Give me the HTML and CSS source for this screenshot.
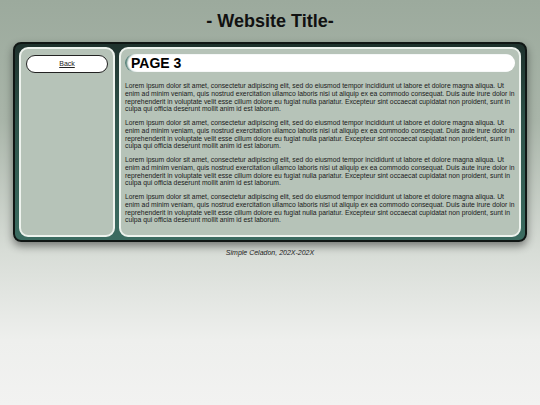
FILE: index.html
```html
<!DOCTYPE html>
<html>
<head>
<meta charset="utf-8">
<link rel="stylesheet" href="styles.css">
</head>
<body>
<header class="site-header"><h1 class="site-title">- Website Title-</h1></header>
<div class="frame">
  <nav class="sidebar">
    <a class="back-btn" href="#">Back</a>
  </nav>
  <main class="content">
    <h2 class="page-title">PAGE 3</h2>
    <p>Lorem ipsum dolor sit amet, consectetur adipiscing elit, sed do eiusmod tempor incididunt ut labore et dolore magna aliqua. Ut enim ad minim veniam, quis nostrud exercitation ullamco laboris nisi ut aliquip ex ea commodo consequat. Duis aute irure dolor in reprehenderit in voluptate velit esse cillum dolore eu fugiat nulla pariatur. Excepteur sint occaecat cupidatat non proident, sunt in culpa qui officia deserunt mollit anim id est laborum.</p>
    <p>Lorem ipsum dolor sit amet, consectetur adipiscing elit, sed do eiusmod tempor incididunt ut labore et dolore magna aliqua. Ut enim ad minim veniam, quis nostrud exercitation ullamco laboris nisi ut aliquip ex ea commodo consequat. Duis aute irure dolor in reprehenderit in voluptate velit esse cillum dolore eu fugiat nulla pariatur. Excepteur sint occaecat cupidatat non proident, sunt in culpa qui officia deserunt mollit anim id est laborum.</p>
    <p>Lorem ipsum dolor sit amet, consectetur adipiscing elit, sed do eiusmod tempor incididunt ut labore et dolore magna aliqua. Ut enim ad minim veniam, quis nostrud exercitation ullamco laboris nisi ut aliquip ex ea commodo consequat. Duis aute irure dolor in reprehenderit in voluptate velit esse cillum dolore eu fugiat nulla pariatur. Excepteur sint occaecat cupidatat non proident, sunt in culpa qui officia deserunt mollit anim id est laborum.</p>
    <p>Lorem ipsum dolor sit amet, consectetur adipiscing elit, sed do eiusmod tempor incididunt ut labore et dolore magna aliqua. Ut enim ad minim veniam, quis nostrud exercitation ullamco laboris nisi ut aliquip ex ea commodo consequat. Duis aute irure dolor in reprehenderit in voluptate velit esse cillum dolore eu fugiat nulla pariatur. Excepteur sint occaecat cupidatat non proident, sunt in culpa qui officia deserunt mollit anim id est laborum.</p>
  </main>
</div>
<footer class="site-footer">Simple Celadon, 202X-202X</footer>
</body>
</html>
```
FILE: styles.css
```css
html, body {
  margin: 0;
  padding: 0;
}
body {
  min-height: 405px;
  font-family: "Liberation Sans", Arial, sans-serif;
  color: #111;
  background: linear-gradient(to bottom, #9caa9d 0px, #a9b5a9 120px, #d7dcd6 250px, #eeefed 340px, #f2f2f1 405px);
}
.site-header {
  padding-top: 11px;
  height: 42px;
  box-sizing: border-box;
}
.site-title {
  margin: 0;
  text-align: center;
  font-size: 18px;
  line-height: 20px;
  font-weight: bold;
}
.frame {
  margin: 0 13px;
  height: 200px;
  box-sizing: border-box;
  border: 2px solid #101614;
  border-radius: 8px;
  background: linear-gradient(to bottom, #1f322d 0%, #2f544b 40%, #3c6c61 100%);
  box-shadow: 0 4px 9px rgba(0,0,0,0.45);
  padding: 3px 4px 3px 4px;
  display: flex;
  gap: 4px;
}
.sidebar, .content {
  background: #b6c3b8;
  border: 2px solid #eef3ee;
  border-radius: 9px;
  box-sizing: border-box;
}
.sidebar {
  width: 96px;
  flex: none;
  padding: 6px 5px;
}
.back-btn {
  display: block;
  height: 18px;
  box-sizing: border-box;
  background: #fff;
  border: 1px solid #222;
  border-radius: 9px;
  text-align: center;
  font-size: 7px;
  line-height: 16px;
  color: #222;
  text-decoration: underline;
}
.content {
  flex: 1;
  padding: 5px 4px 0 4px;
  overflow: hidden;
}
.page-title {
  margin: 0 0 10px 0;
  height: 18px;
  background: #fff;
  border-radius: 9px;
  box-shadow: inset 3px 0 2px -1px #4d7a70;
  padding-left: 6px;
  font-size: 14px;
  line-height: 18px;
  font-weight: bold;
  color: #000;
}
.content p {
  margin: 0 0 6px 0;
  font-size: 6.8px;
  line-height: 7.75px;
  color: #1a1a1a;
}
.site-footer {
  text-align: center;
  font-style: italic;
  font-size: 7px;
  color: #222;
  margin-top: 7px;
}
```
